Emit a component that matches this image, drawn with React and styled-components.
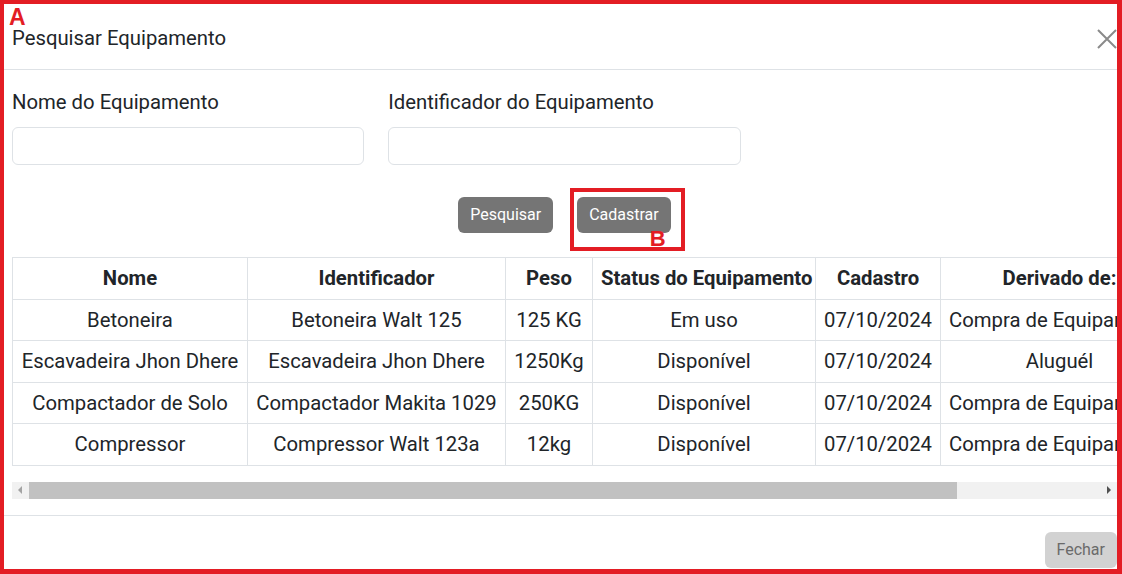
import React from "react";
import styled, { createGlobalStyle } from "styled-components";

const GlobalStyle = createGlobalStyle`
  html, body { margin: 0; padding: 0; background: #ffffff; }
  body { font-family: Roboto, "Liberation Sans", Arial, sans-serif; color: #212529; }
  * { box-sizing: border-box; }
`;

const RED = "#e31d24";
const TEXT = "20.3px";

const Frame = styled.div`
  position: relative;
  width: 1122px;
  height: 574px;
  border-style: solid;
  border-color: ${RED};
  border-width: 4px 5px 5px 4px;
  overflow: hidden;
  background: #fff;
`;

const Marker = styled.span`
  position: absolute;
  color: ${RED};
  font-family: "Liberation Sans", Arial, sans-serif;
  font-weight: 700;
  font-size: ${(p) => p.$size || 23}px;
  line-height: 1;
  z-index: 3;
`;

const MarkerA = styled(Marker)`
  left: 5px;
  top: 2px;
`;

const MarkerB = styled(Marker)`
  right: 15px;
  bottom: -3px;
`;

const Modal = styled.div`
  width: 1121px;
  display: flex;
  flex-direction: column;
`;

const Header = styled.div`
  height: 66px;
  padding: 0 8px;
  border-bottom: 1px solid #dee2e6;
  display: flex;
  align-items: center;
  justify-content: space-between;
`;

const Title = styled.h5`
  margin: 3px 0 0;
  font-size: ${TEXT};
  font-weight: 400;
  line-height: 28px;
  color: #212529;
`;

const CloseBtn = styled.button`
  width: 20px;
  height: 20px;
  padding: 0;
  margin-top: 4px;
  border: 0;
  background: transparent;
  display: flex;
  align-items: center;
  justify-content: center;
`;

const Body = styled.div`
  padding: 18px 8px 16px;
`;

const FormGrid = styled.div`
  display: grid;
  grid-template-columns: repeat(3, 1fr);
  column-gap: 24px;
`;

const Field = styled.div`
  display: flex;
  flex-direction: column;
`;

const Label = styled.label`
  font-size: ${TEXT};
  line-height: 28px;
  margin-bottom: 11px;
  color: #212529;
`;

const Input = styled.input`
  height: 38px;
  border: 1px solid #dee2e6;
  border-radius: 6px;
  padding: 6px 12px;
  font-size: 16px;
  font-family: inherit;
  outline: none;
`;

const Actions = styled.div`
  margin-top: 32px;
  display: flex;
  justify-content: center;
  gap: 24px;
`;

const Button = styled.button`
  height: 36px;
  padding: 6px 12px;
  border: 0;
  border-radius: 6px;
  font-family: inherit;
  font-size: 16px;
  line-height: 24px;
  background: ${(p) => (p.$light ? "#d2d2d2" : "#757575")};
  color: ${(p) => (p.$light ? "#6a6a6a" : "#ffffff")};
`;

const Highlight = styled.div`
  position: relative;
  display: flex;
`;

const HighlightBox = styled.span`
  position: absolute;
  left: -7px;
  top: -9px;
  right: -14px;
  bottom: -18px;
  border: 4px solid ${RED};
  pointer-events: none;
`;

const TableWrap = styled.div`
  margin-top: 24px;
  display: flex;
  flex-direction: column;
`;

const TableViewport = styled.div`
  overflow: hidden;
`;

const Table = styled.table`
  width: 1275px;
  table-layout: fixed;
  border-collapse: collapse;
  margin-bottom: 16px;
  font-size: ${TEXT};
  color: #212529;
`;

const Col = styled.col`
  width: ${(p) => p.$w}px;
`;

const Th = styled.th`
  border: 1px solid #dee2e6;
  padding: 7px 8px;
  line-height: 26.5px;
  font-weight: 700;
  text-align: center;
  white-space: nowrap;
  overflow: hidden;
`;

const Td = styled.td`
  border: 1px solid #dee2e6;
  padding: 7px 8px;
  line-height: 26.5px;
  text-align: center;
  white-space: nowrap;
  overflow: hidden;
`;

const ScrollBar = styled.div`
  height: 17px;
  display: flex;
  background: #f1f1f1;
`;

const ScrollArrow = styled.div`
  width: 17px;
  height: 17px;
  flex: none;
  display: flex;
  align-items: center;
  justify-content: center;
`;

const ScrollTrack = styled.div`
  flex: 1;
  display: flex;
`;

const ScrollThumb = styled.div`
  height: 100%;
  background: #c1c1c1;
`;

const Footer = styled.div`
  border-top: 1px solid #dee2e6;
  padding: 16px 8px;
  display: flex;
  justify-content: flex-end;
`;

const columns = [
  { label: "Nome", w: 235 },
  { label: "Identificador", w: 258 },
  { label: "Peso", w: 87 },
  { label: "Status do Equipamento", w: 223 },
  { label: "Cadastro", w: 125 },
  { label: "Derivado de:", w: 238 },
  { label: "Ações", w: 109 },
];

const rows = [
  ["Betoneira", "Betoneira Walt 125", "125 KG", "Em uso", "07/10/2024", "Compra de Equipamento", ""],
  ["Escavadeira Jhon Dhere", "Escavadeira Jhon Dhere", "1250Kg", "Disponível", "07/10/2024", "Aluguél", ""],
  ["Compactador de Solo", "Compactador Makita 1029", "250KG", "Disponível", "07/10/2024", "Compra de Equipamento", ""],
  ["Compressor", "Compressor Walt 123a", "12kg", "Disponível", "07/10/2024", "Compra de Equipamento", ""],
];

const VIEW_WIDTH = 1105;
const TABLE_WIDTH = 1275;

export default function App() {
  const thumbPct = (VIEW_WIDTH / TABLE_WIDTH) * 100;
  return (
    <>
      <GlobalStyle />
      <Frame>
        <MarkerA>A</MarkerA>
        <Modal>
          <Header>
            <Title>Pesquisar Equipamento</Title>
            <CloseBtn aria-label="Fechar">
              <svg width="20" height="20" viewBox="0 0 20 20">
                <path d="M1 1 L19 19 M19 1 L1 19" stroke="#8a8a8a" strokeWidth="2" fill="none" />
              </svg>
            </CloseBtn>
          </Header>
          <Body>
            <FormGrid>
              <Field>
                <Label>Nome do Equipamento</Label>
                <Input type="text" />
              </Field>
              <Field>
                <Label>Identificador do Equipamento</Label>
                <Input type="text" />
              </Field>
            </FormGrid>
            <Actions>
              <Button>Pesquisar</Button>
              <Highlight>
                <Button>Cadastrar</Button>
                <HighlightBox>
                  <MarkerB $size={22}>B</MarkerB>
                </HighlightBox>
              </Highlight>
            </Actions>
            <TableWrap>
              <TableViewport>
                <Table>
                  <colgroup>
                    {columns.map((c) => (
                      <Col key={c.label} $w={c.w} />
                    ))}
                  </colgroup>
                  <thead>
                    <tr>
                      {columns.map((c) => (
                        <Th key={c.label}>{c.label}</Th>
                      ))}
                    </tr>
                  </thead>
                  <tbody>
                    {rows.map((r, i) => (
                      <tr key={i}>
                        {r.map((cell, j) => (
                          <Td key={j}>{cell}</Td>
                        ))}
                      </tr>
                    ))}
                  </tbody>
                </Table>
              </TableViewport>
              <ScrollBar>
                <ScrollArrow>
                  <svg width="5" height="8" viewBox="0 0 5 8">
                    <path d="M4 0 L0 4 L4 8 Z" fill="#a3a3a3" />
                  </svg>
                </ScrollArrow>
                <ScrollTrack>
                  <ScrollThumb style={{ width: `${thumbPct}%` }} />
                </ScrollTrack>
                <ScrollArrow>
                  <svg width="5" height="8" viewBox="0 0 5 8">
                    <path d="M1 0 L5 4 L1 8 Z" fill="#505050" />
                  </svg>
                </ScrollArrow>
              </ScrollBar>
            </TableWrap>
          </Body>
          <Footer>
            <Button $light>Fechar</Button>
          </Footer>
        </Modal>
      </Frame>
    </>
  );
}
